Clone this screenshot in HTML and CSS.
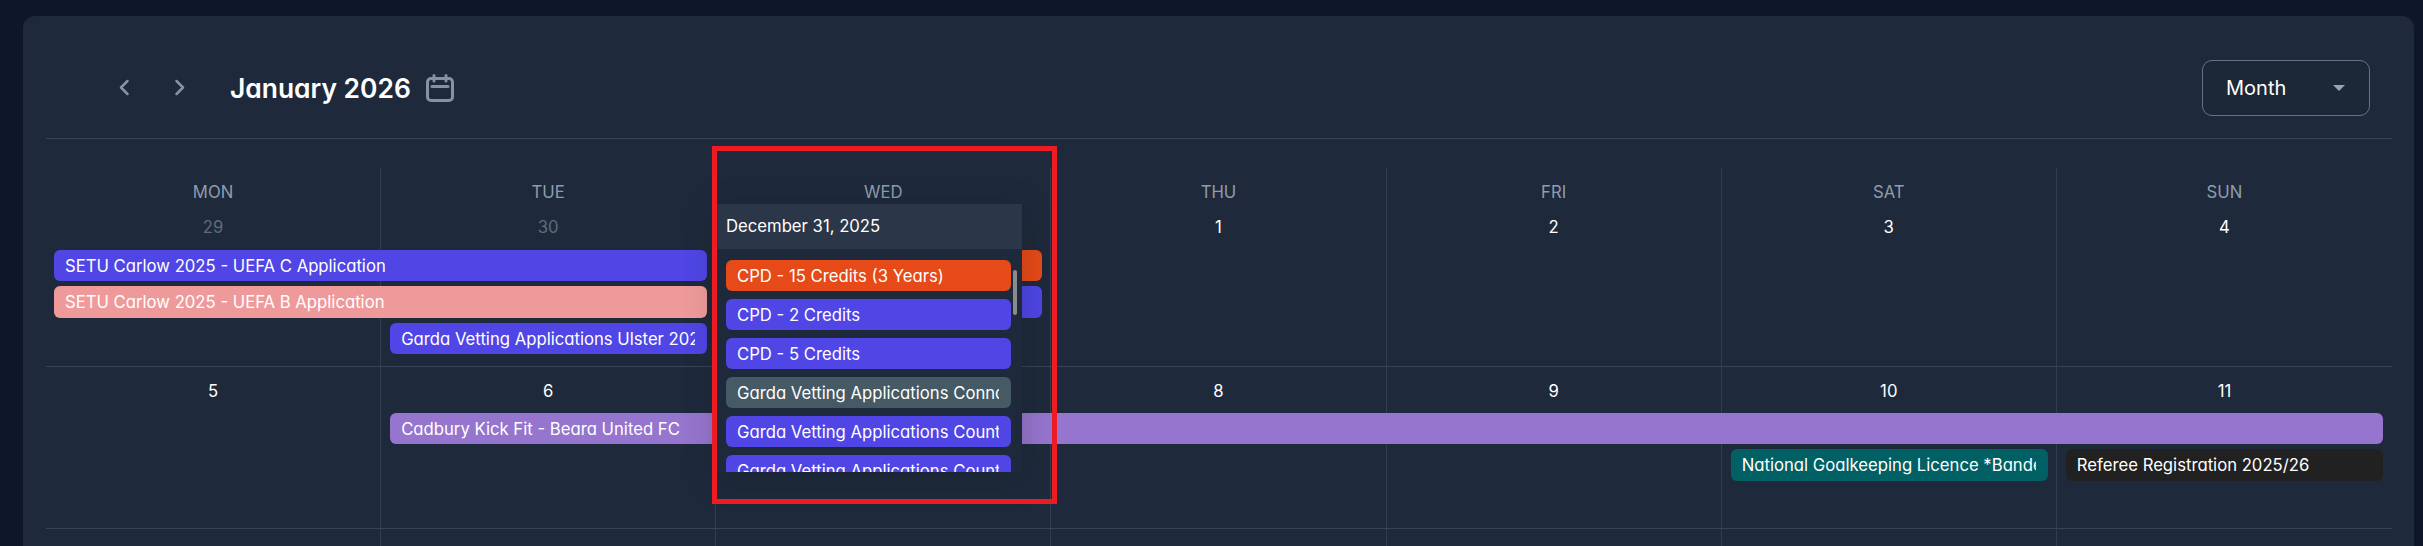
FILE: index.html
```html
<!DOCTYPE html>
<html lang="en">
<head>
<meta charset="utf-8">
<title>Calendar</title>
<link rel="stylesheet" href="styles.css">
</head>
<body>
<main class="card">
  <header class="toolbar">
    <button class="nav" aria-label="Previous"><svg width="12" height="17" viewBox="0 0 12 17"><path d="M9.5 2 L3 8.5 L9.5 15"/></svg></button>
    <button class="nav" aria-label="Next"><svg width="12" height="17" viewBox="0 0 12 17"><path d="M2.5 2 L9 8.5 L2.5 15"/></svg></button>
    <h1 class="title">January 2026</h1>
    <svg class="cal-icon" width="28" height="28" viewBox="0 0 28 28"><rect x="1.5" y="4.5" width="25" height="22" rx="3.5"/><path d="M8 1.5 V7 M20 1.5 V7 M6 12.5 H22"/></svg>
    <div class="select"><span>Month</span><i class="caret"></i></div>
  </header>
  <section class="calendar">
    <div class="week first">
      <div class="cell c1"><span class="dow">MON</span><span class="num muted">29</span></div>
      <div class="cell c2"><span class="dow">TUE</span><span class="num muted">30</span></div>
      <div class="cell c3"><span class="dow">WED</span><span class="num">31</span></div>
      <div class="cell c4"><span class="dow">THU</span><span class="num">1</span></div>
      <div class="cell c5"><span class="dow">FRI</span><span class="num">2</span></div>
      <div class="cell c6"><span class="dow">SAT</span><span class="num">3</span></div>
      <div class="cell c7"><span class="dow">SUN</span><span class="num">4</span></div>
      <div class="event blue r1 s1-2"><span>SETU Carlow 2025 - UEFA C Application</span></div>
      <div class="event salmon r2 s1-2"><span>SETU Carlow 2025 - UEFA B Application</span></div>
      <div class="event blue r3 s2"><span>Garda Vetting Applications Ulster 2025</span></div>
      <div class="event orange r1 s3"><span>CPD - 15 Credits (3 Years)</span></div>
      <div class="event blue r2 s3"><span>CPD - 2 Credits</span></div>
    </div>
    <div class="week">
      <div class="cell c1"><span class="num">5</span></div>
      <div class="cell c2"><span class="num">6</span></div>
      <div class="cell c3"><span class="num">7</span></div>
      <div class="cell c4"><span class="num">8</span></div>
      <div class="cell c5"><span class="num">9</span></div>
      <div class="cell c6"><span class="num">10</span></div>
      <div class="cell c7"><span class="num">11</span></div>
      <div class="event purple r1 s2-7"><span>Cadbury Kick Fit - Beara United FC</span></div>
      <div class="event teal r2 s6"><span>National Goalkeeping Licence *Banded</span></div>
      <div class="event dark r2 s7"><span>Referee Registration 2025/26</span></div>
    </div>
    <div class="week">
      <div class="cell c1"></div><div class="cell c2"></div><div class="cell c3"></div><div class="cell c4"></div><div class="cell c5"></div><div class="cell c6"></div><div class="cell c7"></div>
    </div>
    <div class="popover">
      <div class="pop-head">December 31, 2025</div>
      <div class="pop-list">
        <div class="event orange"><span>CPD - 15 Credits (3 Years)</span></div>
        <div class="event blue"><span>CPD - 2 Credits</span></div>
        <div class="event blue"><span>CPD - 5 Credits</span></div>
        <div class="event slate"><span>Garda Vetting Applications Connacht</span></div>
        <div class="event blue"><span>Garda Vetting Applications Counties</span></div>
        <div class="event blue"><span>Garda Vetting Applications Counties</span></div>
      </div>
      <i class="thumb"></i>
    </div>
    <div class="highlight"></div>
  </section>
</main>
</body>
</html>
```
FILE: styles.css
```css
* { box-sizing: border-box; }
html, body { margin: 0; height: 100%; overflow: hidden; }
body {
  background: #0e172a;
  padding: 16px 9px 0 23px;
  font-family: Inter, "Noto Sans", sans-serif;
  font-feature-settings: "cv11";
  color: #fff;
}
.card {
  height: 530px;
  overflow: hidden;
  background: #1e2a3c;
  border-radius: 12px 12px 0 0;
  padding: 0 22px 0 23px;
}
.toolbar {
  display: flex;
  align-items: center;
  height: 123px;
  padding: 44px 22px 23px 50px;
  border-bottom: 1px solid #394456;
}
.nav {
  width: 56px;
  height: 40px;
  padding: 0;
  margin: 0;
  background: none;
  border: 0;
  display: flex;
  align-items: center;
  justify-content: center;
}
.nav svg path { fill: none; stroke: #8592a6; stroke-width: 2.5; stroke-linecap: round; stroke-linejoin: round; }
.title {
  margin: 0 15px 0 22px;
  font-size: 26.4px;
  font-weight: 600;
  line-height: 32px;
  white-space: nowrap;
}
.cal-icon rect, .cal-icon path { fill: none; stroke: #8592a6; stroke-width: 3; stroke-linecap: round; }
.select {
  margin-left: auto;
  width: 168px;
  height: 56px;
  display: flex;
  align-items: center;
  justify-content: space-between;
  padding: 0 24px 0 23px;
  background: #1c2738;
  border: 1px solid #64748b;
  border-radius: 10px;
  font-size: 20px;
}
.caret {
  width: 0;
  height: 0;
  border-left: 6px solid transparent;
  border-right: 6px solid transparent;
  border-top: 6px solid #94a3b8;
}
.calendar { position: relative; padding-top: 29px; }
.week {
  display: grid;
  grid-template-columns: repeat(7, 1fr);
  grid-template-rows: 41px 31.25px 31.25px 31.25px 1fr;
  row-gap: 5px;
  height: 162px;
  border-top: 1px solid #394456;
}
.week.first {
  grid-template-rows: 77px 31.25px 31.25px 31.25px 1fr;
  height: 198px;
  border-top: 0;
}
.cell {
  grid-row: 1 / -1;
  display: flex;
  flex-direction: column;
  align-items: center;
  padding-top: 12px;
  border-right: 1px solid #323d50;
}
.c1 { grid-column: 1; }
.c2 { grid-column: 2; }
.c3 { grid-column: 3; }
.c4 { grid-column: 4; }
.c5 { grid-column: 5; }
.c6 { grid-column: 6; }
.c7 { grid-column: 7; border-right: 0; }
.dow { font-size: 16.7px; line-height: 24px; color: #909cae; margin-bottom: 11px; }
.num { font-size: 16.7px; line-height: 24px; color: #fff; }
.num.muted { color: #5f6b7e; }
.event {
  height: 31.25px;
  padding: 0 12px 0 11px;
  border-radius: 6px;
  font-size: 16.7px;
  line-height: 32px;
  color: #fff;
  min-width: 0;
}
.event span { display: block; overflow: hidden; white-space: nowrap; }
.week .event { margin: 0 9px; position: relative; }
.week .s1-2 { margin-left: 8px; }
.r1 { grid-row: 2; }
.r2 { grid-row: 3; }
.r3 { grid-row: 4; }
.s1-2 { grid-column: 1 / 3; }
.s2 { grid-column: 2; }
.s3 { grid-column: 3; }
.s2-7 { grid-column: 2 / 8; }
.s6 { grid-column: 6; }
.s7 { grid-column: 7; }
.blue { background: #4f46e5; }
.orange { background: #e64a19; }
.salmon { background: #ef9a9a; }
.purple { background: #9575cd; }
.teal { background: #006064; }
.dark { background: #212121; }
.slate { background: #455a64; }
.popover {
  position: absolute;
  left: 671px;
  top: 65px;
  width: 305px;
  height: 268px;
  background: #1e2a3c;
  box-shadow: 0 6px 32px rgba(0, 0, 0, 0.18);
  z-index: 2;
}
.pop-head {
  height: 45px;
  padding: 0 9px;
  background: #2b3648;
  font-size: 16.7px;
  line-height: 45px;
}
.pop-list {
  height: 223px;
  padding: 11px 11px 0 9px;
  overflow: hidden;
  display: flex;
  flex-direction: column;
  gap: 8px;
}
.pop-list .event { flex: none; height: 31px; }
.thumb {
  position: absolute;
  left: 296px;
  top: 66px;
  width: 4px;
  height: 45px;
  border-radius: 2px;
  background: #8b8b8b;
}
.highlight {
  position: absolute;
  left: 666px;
  top: 7px;
  width: 345px;
  height: 358px;
  border: 5px solid #ed1c24;
  z-index: 3;
}
```
